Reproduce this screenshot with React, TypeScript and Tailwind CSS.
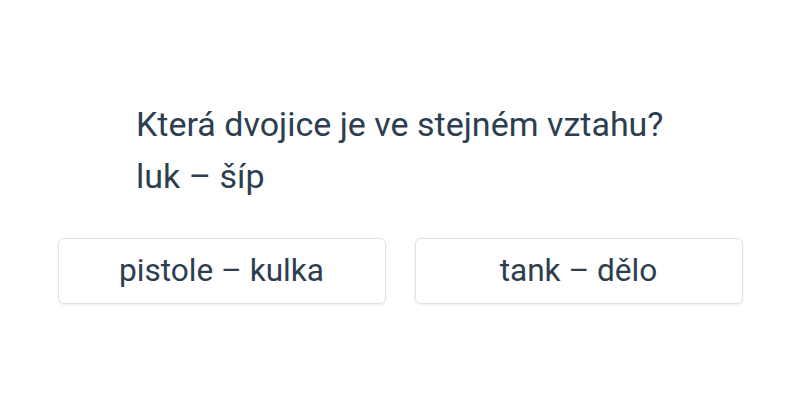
import React from 'react';

const options = ['pistole – kulka', 'tank – dělo'];

export default function App() {
  return (
    <div
      className="w-[800px] h-[400px] bg-white flex flex-col items-center text-[#2c3e50]"
      style={{ fontFamily: 'Roboto, sans-serif' }}
    >
      <div className="w-[528px] mt-[98px] text-[34px] leading-[52px]">
        <p>Která dvojice je ve stejném vztahu?</p>
        <p>luk – šíp</p>
      </div>
      <div className="flex gap-[29px] mt-[36px]">
        {options.map((o) => (
          <button
            key={o}
            className="w-[328px] h-[66px] rounded-md border border-[#e2e2e2] bg-white shadow-[0_1px_3px_rgba(0,0,0,0.08)] text-[31.6px] text-[#2c3e50]"
          >
            {o}
          </button>
        ))}
      </div>
    </div>
  );
}
